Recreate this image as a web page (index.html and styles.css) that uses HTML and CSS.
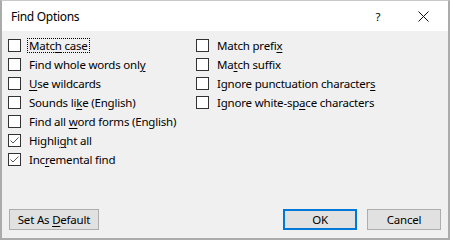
FILE: index.html
```html
<!DOCTYPE html>
<html>
<head>
<meta charset="utf-8">
<link rel="stylesheet" href="styles.css">
</head>
<body>
<div class="window">
  <div class="titlebar">
    <span class="title">Find Options</span>
    <span class="help">?</span>
    <span class="close">
      <svg width="11" height="11" viewBox="0 0 11 11"><path d="M0.5 0.5 L10.5 10.5 M10.5 0.5 L0.5 10.5" stroke="#111" stroke-width="1" fill="none"/></svg>
    </span>
  </div>
  <div class="content">
    <div class="columns">
      <div class="col col-left">
        <div class="opt"><span class="box"></span><span class="label focus">Matc<u>h</u> case</span></div>
        <div class="opt"><span class="box"></span><span class="label">Find whole words onl<u>y</u></span></div>
        <div class="opt"><span class="box"></span><span class="label"><u>U</u>se wildcards</span></div>
        <div class="opt"><span class="box"></span><span class="label">Sounds li<u>k</u>e (English)</span></div>
        <div class="opt"><span class="box"></span><span class="label">Find all <u>w</u>ord forms (English)</span></div>
        <div class="opt"><span class="box checked"><svg width="11" height="11" viewBox="0 0 11 11"><path d="M1.5 5.5 L4 8 L9.5 2.5" stroke="#555" stroke-width="1" fill="none"/></svg></span><span class="label">Highli<u>g</u>ht all</span></div>
        <div class="opt"><span class="box checked"><svg width="11" height="11" viewBox="0 0 11 11"><path d="M1.5 5.5 L4 8 L9.5 2.5" stroke="#555" stroke-width="1" fill="none"/></svg></span><span class="label">Inc<u>r</u>emental find</span></div>
      </div>
      <div class="col col-right">
        <div class="opt"><span class="box"></span><span class="label">Match prefi<u>x</u></span></div>
        <div class="opt"><span class="box"></span><span class="label">Ma<u>t</u>ch suffix</span></div>
        <div class="opt"><span class="box"></span><span class="label">Ignore punctuation character<u>s</u></span></div>
        <div class="opt"><span class="box"></span><span class="label">Ignore white-sp<u>a</u>ce characters</span></div>
      </div>
    </div>
    <div class="footer">
      <button class="btn btn-default">Set As <u>D</u>efault</button>
      <div class="spacer"></div>
      <button class="btn btn-primary">OK</button>
      <button class="btn btn-cancel">Cancel</button>
    </div>
  </div>
</div>
</body>
</html>
```
FILE: styles.css
```css
* { box-sizing: border-box; }
html, body { margin: 0; padding: 0; }
body {
  font-family: "Segoe UI", "Noto Sans", "Open Sans", sans-serif;
  font-size: 11.5px;
  letter-spacing: -0.2px;
  color: #000;
  background: #fff;
}
.window {
  width: 450px;
  height: 240px;
  display: flex;
  flex-direction: column;
  border-top: 1px solid #c8c8c8;
  border-left: 2px solid #ababab;
  border-right: 2px solid #ababab;
  border-bottom: 2px solid #ababab;
  background: #f0f0f0;
}
.titlebar {
  height: 30px;
  background: #fff;
  display: flex;
  align-items: center;
  padding-left: 9px;
}
.title {
  font-size: 12px;
  letter-spacing: -0.3px;
  flex: 1;
}
.help {
  width: 14px;
  margin-right: 33px;
  text-align: center;
}
.close {
  width: 11px;
  height: 11px;
  margin-right: 19px;
  display: flex;
}
.content {
  flex: 1;
  display: flex;
  flex-direction: column;
  padding: 5px 7px 8px 6px;
}
.columns {
  display: flex;
  flex: 1;
}
.col { display: flex; flex-direction: column; }
.col-left { width: 188px; }
.opt {
  height: 19px;
  display: flex;
  align-items: center;
}
.box {
  width: 13px;
  height: 13px;
  border: 1px solid #333;
  background: #fff;
  flex: none;
  display: flex;
  align-items: center;
  justify-content: center;
  margin-right: 6px;
}
.box svg { display: block; }
.label {
  white-space: nowrap;
  padding: 0 1px;
  border: 1px dotted transparent;
  line-height: 13px;
}
.label.focus { border-color: #000; }
u { text-decoration-thickness: 1px; text-underline-offset: 2px; }
.footer {
  display: flex;
  align-items: flex-end;
}
.spacer { flex: 1; }
.btn {
  font-family: inherit;
  font-size: 11.5px;
  letter-spacing: -0.2px;
  color: #000;
  height: 21px;
  padding: 0;
  background: #e1e1e1;
  border: 1px solid #adadad;
  margin: 0 0 0 1px;
}
.btn-default { width: 90px; }
.btn-primary {
  width: 74px;
  border: 2px solid #0078d7;
  margin-right: 10px;
}
.btn-cancel { width: 74px; margin: 0; }
```
